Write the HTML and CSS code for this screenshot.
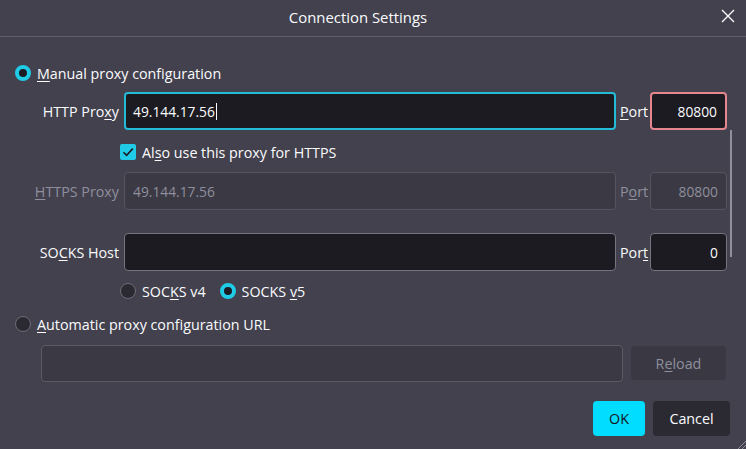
FILE: index.html
```html
<!DOCTYPE html>
<html>
<head>
<meta charset="utf-8">
<link rel="stylesheet" href="styles.css">
</head>
<body>
<div class="dialog">
  <div class="titlebar">
    <div class="title">Connection Settings</div>
    <svg class="close" width="14" height="14" viewBox="0 0 14 14"><path d="M1 1L13 13M13 1L1 13" stroke="#fbfbfe" stroke-width="1.4" fill="none"/></svg>
  </div>
  <div class="content">
    <div class="radio-row top">
      <span class="radio on"></span><span class="lbl"><u>M</u>anual proxy configuration</span>
    </div>
    <div class="proxy-row r-http">
      <span class="rlabel">HTTP Pro<u>x</u>y</span>
      <div class="field focus">49.144.17.56<span class="caret"></span></div>
      <span class="plabel"><u>P</u>ort</span>
      <div class="field port invalid">80800</div>
    </div>
    <div class="check-row">
      <span class="check"><svg width="16" height="16" viewBox="0 0 16 16"><path d="M3.5 8.2L6.6 11.3L12.8 4.6" stroke="#1c1b22" stroke-width="1.6" fill="none"/></svg></span>
      <span class="lbl">Al<u>s</u>o use this proxy for HTTPS</span>
    </div>
    <div class="proxy-row r-https disabled">
      <span class="rlabel"><u>H</u>TTPS Proxy</span>
      <div class="field">49.144.17.56</div>
      <span class="plabel">P<u>o</u>rt</span>
      <div class="field port">80800</div>
    </div>
    <div class="proxy-row r-socks">
      <span class="rlabel">SO<u>C</u>KS Host</span>
      <div class="field"></div>
      <span class="plabel">Por<u>t</u></span>
      <div class="field port">0</div>
    </div>
    <div class="socks-row">
      <span class="radio"></span><span class="lbl">SOC<u>K</u>S v4</span>
      <span class="radio on second"></span><span class="lbl">SOCKS <u>v</u>5</span>
    </div>
    <div class="radio-row auto">
      <span class="radio"></span><span class="lbl"><u>A</u>utomatic proxy configuration URL</span>
    </div>
    <div class="url-row">
      <div class="field url"></div>
      <div class="btn reload">R<u>e</u>load</div>
    </div>
    <div class="buttons">
      <div class="btn ok">OK</div>
      <div class="btn cancel">Cancel</div>
    </div>
  </div>
  <div class="scrollbar"></div>
  <svg class="grip" width="10" height="10" viewBox="0 0 10 10"><path d="M10 2L2 10M10 6L6 10" stroke="#8f8f9d" stroke-width="1"/></svg>
</div>
</body>
</html>
```
FILE: styles.css
```css
* { box-sizing: border-box; }
html, body { margin: 0; padding: 0; }
body {
  width: 746px;
  height: 449px;
  overflow: hidden;
  background: #42414d;
  color: #fbfbfe;
  font-family: "Open Sans", "Noto Sans", sans-serif;
  font-size: 14.3px;
}
u { text-decoration: underline; text-underline-offset: 2px; text-decoration-thickness: 1px; }
.dialog { position: relative; width: 746px; height: 449px; }
.titlebar {
  height: 37px;
  border-bottom: 1px solid #5e5d69;
  display: flex;
  align-items: center;
  justify-content: center;
  position: relative;
  padding-right: 30px;
}
.title { font-size: 14.9px; margin-top: -3px; }
.close { position: absolute; right: 11px; top: 9px; }
.content { display: flex; flex-direction: column; }
.radio-row, .check-row, .socks-row { display: flex; align-items: center; height: 20px; }
.radio-row { padding-left: 15px; }
.radio-row.top { margin-top: 26px; }
.radio-row.auto { margin-top: 13px; }
.radio {
  width: 16px; height: 16px; border-radius: 50%;
  background: #2b2a33;
  border: 1px solid #6d6c77;
  flex: none;
  margin-right: 6px;
}
.radio.on {
  background: #1c1b22;
  border: 4.5px solid #1fcbe6;
}
.lbl { white-space: nowrap; }
.proxy-row {
  display: grid;
  grid-template-columns: 124px 492px 34px 77px;
  align-items: center;
  height: 38px;
}
.r-http { margin-top: 9px; }
.r-https { margin-top: 10px; }
.r-socks { margin-top: 23px; }
.rlabel { text-align: right; padding-right: 5px; white-space: nowrap; }
.plabel { padding-left: 4px; }
.field {
  height: 38px;
  background: #1c1b22;
  border: 1px solid #75747f;
  border-radius: 4px;
  padding: 0 8px;
  display: flex;
  align-items: center;
  font-size: 13.8px;
  color: #fbfbfe;
}
.field.focus { border: 2px solid #22bcd6; padding-left: 7px; }
.field.invalid { border: 2px solid #e5868e; }
.field.port { justify-content: flex-end; }
.caret { display: inline-block; width: 1px; height: 17px; background: #fbfbfe; margin-left: 1px; }
.disabled .rlabel, .disabled .plabel { color: #8f8f9d; }
.disabled .field { background: #3a3944; border-color: #55545f; color: #8f8f9d; }
.check-row { margin-top: 12px; padding-left: 120px; }
.check {
  width: 16px; height: 16px; border-radius: 2px;
  background: #1fcbe6;
  margin-right: 6px;
  display: flex;
}
.socks-row { margin-top: 10px; padding-left: 120px; }
.socks-row .radio.second { margin-left: 14px; }
.url-row { display: flex; align-items: center; margin-top: 10px; padding-left: 41px; height: 38px; }
.field.url { width: 582px; height: 37px; background: #3a3944; border-color: #5a5964; }
.btn {
  display: flex; align-items: center; justify-content: center;
  border-radius: 4px;
  font-size: 14.3px;
}
.reload { margin-left: 8px; width: 95px; height: 34px; background: #393843; color: #8f8f9d; }
.buttons { display: flex; justify-content: flex-end; margin-top: 19px; padding-right: 16px; gap: 8px; }
.ok { width: 52px; height: 35px; background: #00ddff; color: #15141a; }
.cancel { width: 77px; height: 35px; background: #2b2a33; color: #fbfbfe; }
.scrollbar { position: absolute; left: 730px; top: 130px; width: 2px; height: 127px; background: #8f8f9d; }
.grip { position: absolute; right: 0; bottom: 0; }
```
